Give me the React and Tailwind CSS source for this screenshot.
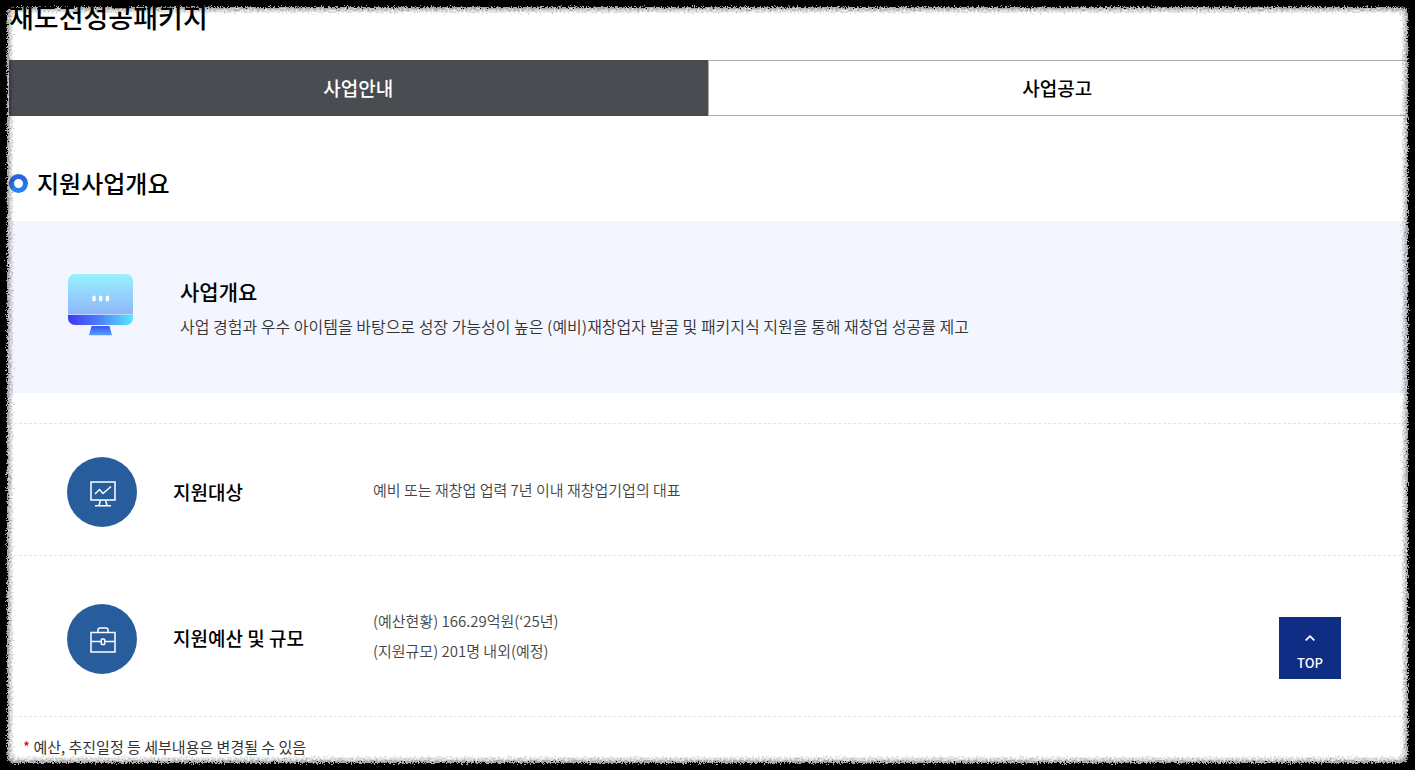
const details = [
  {
    title: "지원대상",
    icon: "board",
    lines: ["예비 또는 재창업 업력 7년 이내 재창업기업의 대표"],
    rowClass: "h-[132px]",
  },
  {
    title: "지원예산 및 규모",
    icon: "briefcase",
    lines: ["(예산현황) 166.29억원(‘25년)", "(지원규모) 201명 내외(예정)"],
    rowClass: "h-[161px]",
  },
];

function MonitorIcon() {
  return (
    <svg width="65" height="66" viewBox="0 0 65 66" aria-hidden="true">
      <defs>
        <linearGradient id="screen" x1="0" y1="0" x2="0" y2="1">
          <stop offset="0" stopColor="#98f0fd" />
          <stop offset="1" stopColor="#8fb5fb" />
        </linearGradient>
        <linearGradient id="bezel" x1="0" y1="0" x2="1" y2="0">
          <stop offset="0" stopColor="#4136f4" />
          <stop offset="0.45" stopColor="#4a7cf8" />
          <stop offset="1" stopColor="#55e9fd" />
        </linearGradient>
        <linearGradient id="stand" x1="0" y1="0" x2="0" y2="1">
          <stop offset="0" stopColor="#3f51f5" />
          <stop offset="1" stopColor="#52a3fb" />
        </linearGradient>
      </defs>
      <path d="M0 41V7a7 7 0 0 1 7-7h51a7 7 0 0 1 7 7v34Z" fill="url(#screen)" />
      <path d="M0 41h65v3a7 7 0 0 1-7 7H7a7 7 0 0 1-7-7Z" fill="url(#bezel)" />
      <path d="M0 40.5h65" stroke="#b9d6fd" />
      <path d="M23.500 52h18l2.500 9.300h-23Z" fill="url(#stand)" />
      <g fill="#fff">
        <rect x="24.300" y="21.500" width="3.400" height="6" rx="1.700" />
        <rect x="31" y="21.500" width="3.400" height="6" rx="1.700" />
        <rect x="37.700" y="21.500" width="3.400" height="6" rx="1.700" />
      </g>
    </svg>
  );
}

function BoardIcon() {
  return (
    <svg width="26" height="26" viewBox="0 0 26 26" fill="none" stroke="#fff" strokeWidth="1.5" aria-hidden="true">
      <path d="M1 1h24v18H1Z" />
      <path d="m5 13 4.500-4.500 3.500 4L21 5.500" />
      <path d="M10.500 19 9 24.500M15.500 19l1.500 5.500M5 24.800h16" />
    </svg>
  );
}

function BriefcaseIcon() {
  return (
    <svg width="26" height="26" viewBox="0 0 26 26" fill="none" stroke="#fff" strokeWidth="1.5" aria-hidden="true">
      <path d="M1 5.500h24V25H1Z" />
      <path d="M8 5.500V3a2 2 0 0 1 2-2h6a2 2 0 0 1 2 2v2.500" />
      <path d="M1 14.500h10M15 14.500h10" />
      <rect x="11.300" y="12" width="3.400" height="5.500" rx="0.800" />
    </svg>
  );
}

// ragged black frame around the window
function RoughFrame() {
  return (
    <svg className="pointer-events-none fixed inset-0 z-20 h-full w-full mix-blend-multiply" aria-hidden="true">
      <defs>
        <filter id="rough" filterUnits="userSpaceOnUse" x="0" y="0" width="100%" height="100%">
          <feTurbulence type="fractalNoise" baseFrequency="0.7" numOctaves="2" seed="4" result="noise" />
          <feDisplacementMap in="SourceGraphic" in2="noise" scale="7" xChannelSelector="R" yChannelSelector="G" />
        </filter>
        <filter id="haze" filterUnits="userSpaceOnUse" x="0" y="0" width="100%" height="100%">
          <feTurbulence type="fractalNoise" baseFrequency="0.5" numOctaves="2" seed="9" result="noise" />
          <feDisplacementMap in="SourceGraphic" in2="noise" scale="9" xChannelSelector="R" yChannelSelector="G" />
          <feGaussianBlur stdDeviation="0.7" />
        </filter>
      </defs>
      <g fill="none" filter="url(#haze)">
        <rect width="100%" height="100%" rx="18" stroke="#dcdcdc" strokeWidth="25" />
        <rect width="100%" height="100%" rx="16" stroke="#a8a8a8" strokeWidth="19" />
      </g>
      <g fill="none" stroke="#000" filter="url(#rough)">
        <rect width="100%" height="100%" strokeWidth="14" />
        <rect width="100%" height="100%" rx="14" strokeWidth="14" />
      </g>
      <rect width="100%" height="100%" fill="none" stroke="#000" strokeWidth="8" />
    </svg>
  );
}

export default function App() {
  return (
    <div className="min-h-screen bg-white px-[9px] font-['Noto_Sans_CJK_KR',sans-serif] text-black">
      <h1 className="text-[27px] font-medium leading-[34px]">재도전성공패키지</h1>

      {/* TABS */}
      <nav className="mt-[26px] grid h-14 grid-cols-2 text-[19px] font-medium">
        <a href="#guide" className="flex items-center justify-center bg-[#494c51] text-white">
          사업안내
        </a>
        <a href="#notice" className="flex items-center justify-center border-y border-l border-[#adadad]">
          사업공고
        </a>
      </nav>

      <main>
        <h2 className="mt-[51px] flex items-center gap-[9px] text-2xl font-medium">
          <svg width="19" height="19" viewBox="0 0 19 19" aria-hidden="true">
            <defs>
              <linearGradient id="ring" x1="0" y1="0" x2="0" y2="1">
                <stop offset="0" stopColor="#2b62db" />
                <stop offset="1" stopColor="#2486f4" />
              </linearGradient>
            </defs>
            <circle cx="9.500" cy="9.500" r="7" fill="none" stroke="url(#ring)" strokeWidth="5" />
          </svg>
          지원사업개요
        </h2>

        {/* OVERVIEW */}
        <section className="mt-[22px] flex min-h-[172px] items-center gap-[47px] bg-[#f3f6ff] px-[59px]">
          <MonitorIcon />
          <div className="pt-[2px]">
            <h3 className="text-[21px] font-medium leading-9">사업개요</h3>
            <p className="text-base font-[350] leading-[34px] text-[#333]">
              사업 경험과 우수 아이템을 바탕으로 성장 가능성이 높은 (예비)재창업자 발굴 및 패키지식 지원을 통해 재창업 성공률 제고
            </p>
          </div>
        </section>

        {/* DETAILS */}
        <dl className="mt-[30px] border-b border-dashed border-[#e4e4e4]">
          {details.map((d) => (
            <div
              key={d.title}
              className={`flex items-center border-t border-dashed border-[#e4e4e4] pl-[58px] ${d.rowClass}`}
            >
              <dt className="flex w-[306px] items-center gap-9 pt-[5px] text-[19px] font-medium">
                <span className="flex size-[70px] items-center justify-center rounded-full bg-[#285d9d] pl-[2px] pt-[3px]">
                  {d.icon === "board" ? <BoardIcon /> : <BriefcaseIcon />}
                </span>
                {d.title}
              </dt>
              <dd className="text-[15px] font-[350] leading-[30px] text-[#444]">
                {d.lines.map((line) => (
                  <p key={line}>{line}</p>
                ))}
              </dd>
            </div>
          ))}
        </dl>

        <p className="mt-4 px-[14px] text-[15px] leading-7 text-[#333]">
          <span className="text-[#d00]">*</span> 예산, 추진일정 등 세부내용은 변경될 수 있음
        </p>
      </main>

      <button
        type="button"
        onClick={() => window.scrollTo({ top: 0, behavior: "smooth" })}
        className="fixed bottom-[91px] right-[74px] flex size-[62px] flex-col items-center justify-end gap-3 bg-[#0f2d84] pb-[7px] text-[13px] font-medium text-white"
      >
        <svg width="10" height="6" viewBox="0 0 10 6" fill="none" stroke="#fff" strokeWidth="1.8" aria-hidden="true">
          <path d="m0.700 5.400 4.300-4.200 4.300 4.200" />
        </svg>
        TOP
      </button>

      <RoughFrame />
    </div>
  );
}
